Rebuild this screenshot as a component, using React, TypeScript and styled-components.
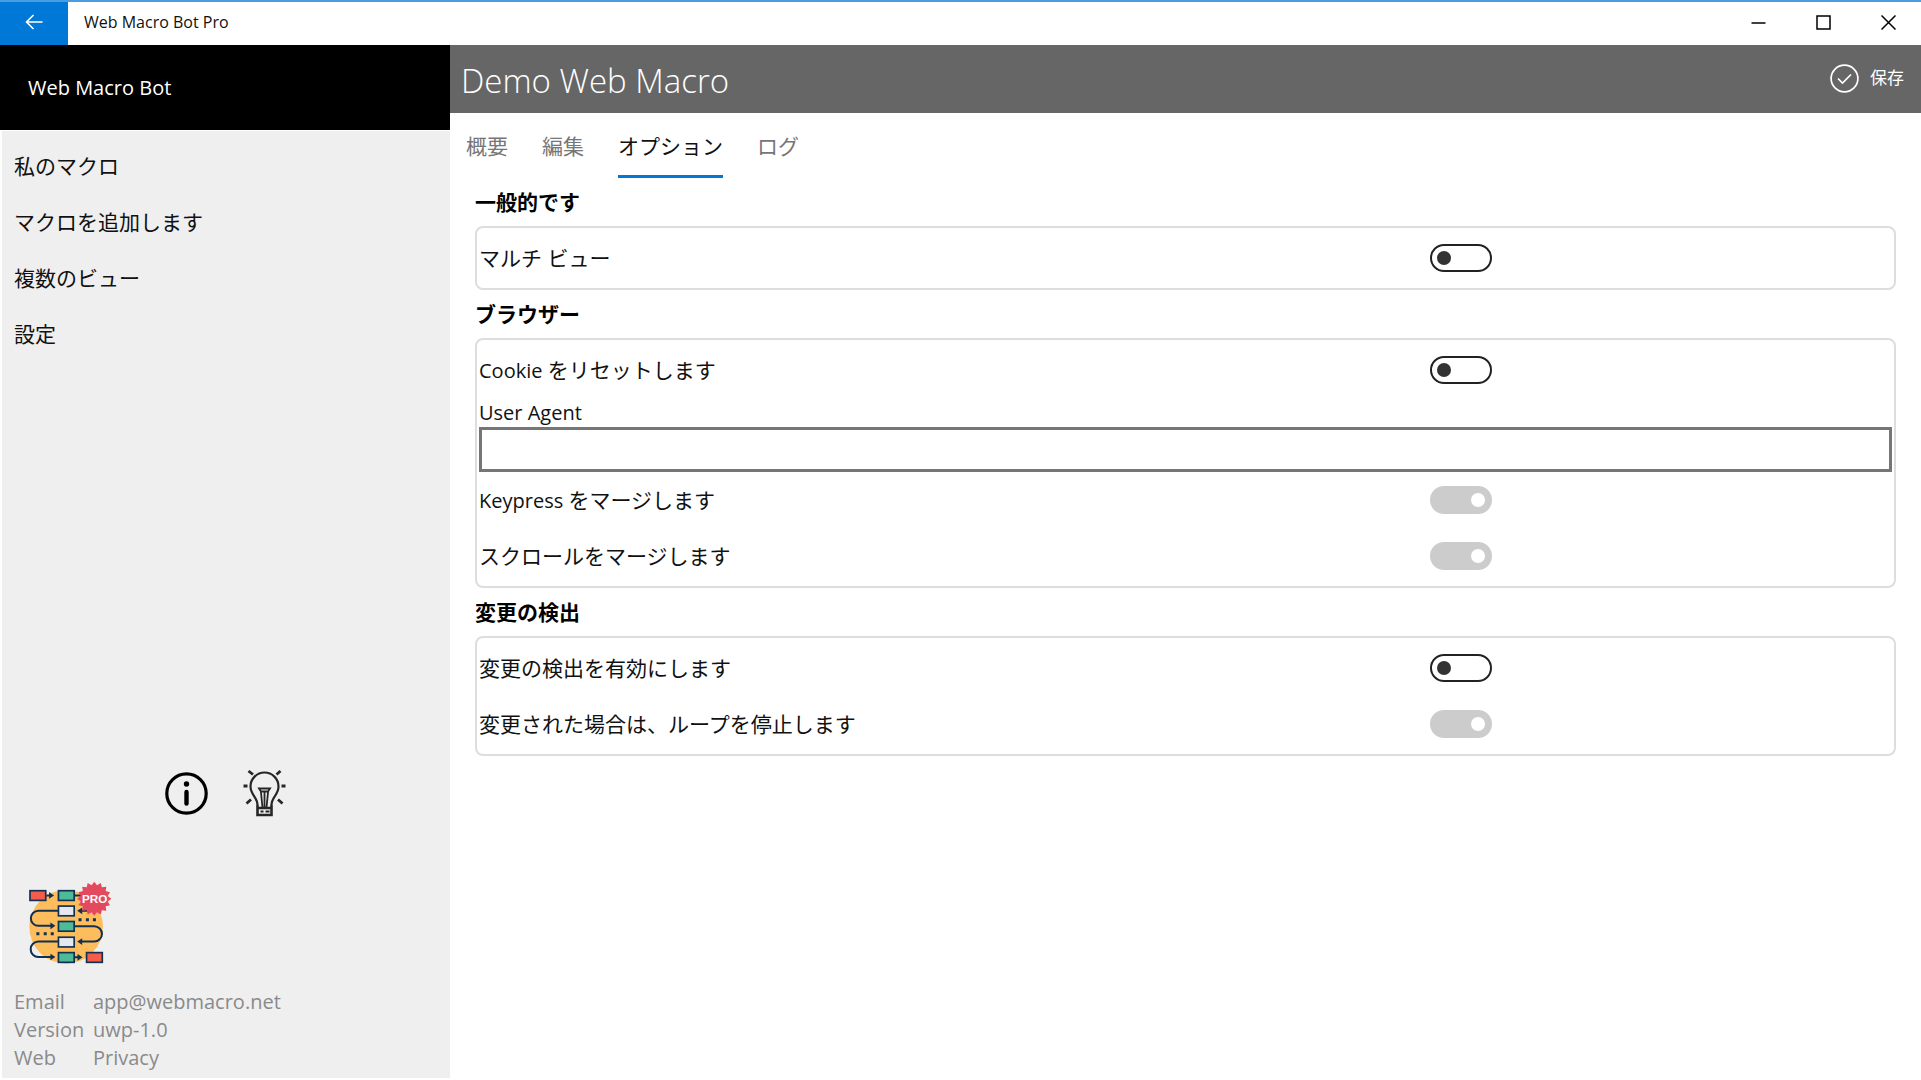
import React, { useState } from "react";
import styled, { createGlobalStyle, css } from "styled-components";

const GlobalStyle = createGlobalStyle`
  *, *::before, *::after { box-sizing: border-box; }
  body {
    margin: 0;
    background: #fff;
    color: #111;
    font-family: "Open Sans", "Noto Sans CJK JP", sans-serif;
    font-size: 21px;
    line-height: 28px;
  }
  button, input { font: inherit; color: inherit; }
`;

const Shell = styled.div`
  display: flex;
  flex-direction: column;
  min-height: 100vh;
`;

const TitleBar = styled.header`
  display: flex;
  align-items: stretch;
  height: 45px;
  border-top: 2px solid #4a9be0;
`;

const BackButton = styled.button`
  display: grid;
  place-items: center;
  width: 68px;
  margin: 0;
  padding: 0 0 3px;
  border: 0;
  background: #0078d7;
  color: #fff;
`;

const WindowTitle = styled.div`
  flex: 1;
  padding-left: 16px;
  font-size: 16px;
  line-height: 40px;
`;

const WindowButton = styled.button`
  display: grid;
  place-items: center;
  width: 65px;
  padding: 0 0 2px;
  border: 0;
  background: transparent;
`;

const Body = styled.div`
  display: flex;
  flex: 1;
`;

const Sidebar = styled.aside`
  display: flex;
  flex-direction: column;
  flex: 0 0 450px;
  padding-bottom: 2px;
`;

const Brand = styled.div`
  padding: 0 28px;
  background: #000;
  color: #fff;
  font-size: 20px;
  line-height: 85px;
`;

const SidePanel = styled.div`
  display: flex;
  flex-direction: column;
  flex: 1;
  margin: 1px 0 0 2px;
  padding: 7px 12px 6px;
  background: #efefef;
`;

const Nav = styled.nav`
  display: flex;
  flex-direction: column;
`;

const NavLink = styled.a`
  padding: 14px 0;
  color: #111;
  text-decoration: none;
`;

const IconRow = styled.div`
  display: flex;
  justify-content: center;
  align-items: center;
  gap: 34px;
  margin-top: auto;
`;

const IconButton = styled.button`
  display: grid;
  place-items: center;
  padding: 0;
  border: 0;
  background: transparent;
`;

const LogoBox = styled.div`
  display: flex;
  padding: 64px 15px 24px;
`;

const Facts = styled.dl`
  display: grid;
  grid-template-columns: 79px 1fr;
  margin: 0;
  color: #8a8a8a;
  font-size: 20px;

  dd { margin: 0; }
  a { color: inherit; text-decoration: none; }
`;

const Main = styled.main`
  flex: 1;
  min-width: 0;
`;

const PageBar = styled.div`
  display: flex;
  align-items: center;
  justify-content: space-between;
  height: 68px;
  padding: 0 17px 0 11px;
  background: #666;
  color: #fff;
`;

const PageTitle = styled.h1`
  margin: 0;
  padding-top: 4px;
  font-size: 33px;
  font-weight: 300;
  line-height: 44px;
`;

const SaveButton = styled.button`
  display: flex;
  align-items: center;
  gap: 11px;
  padding: 0 0 2px;
  border: 0;
  background: transparent;
  color: #fff;
  font-size: 17px;
  line-height: 28px;
`;

const Tabs = styled.div`
  display: flex;
  gap: 34px;
  padding: 0 16px;
`;

const Tab = styled.button<{ $active: boolean }>`
  height: 65px;
  padding: 4px 0 0;
  border: 0;
  border-bottom: 3px solid ${(p) => (p.$active ? "#0078d7" : "transparent")};
  background: transparent;
  color: ${(p) => (p.$active ? "#111" : "#767676")};
`;

const Options = styled.div`
  padding: 0 25px;
`;

const GroupTitle = styled.h2`
  display: flex;
  align-items: center;
  height: 48px;
  margin: 0;
  font-size: 21px;
  font-weight: 700;
  color: #000;
`;

const Group = styled.div`
  padding: 2px;
  border: 2px solid #ddd;
  border-radius: 8px;
`;

const Row = styled.div`
  display: grid;
  grid-template-columns: 2fr 1fr;
  align-items: center;
  height: 56px;
`;

const Latin = styled.span`
  font-size: 20px;
`;

const knob = css`
  content: "";
  width: 14px;
  height: 14px;
  border-radius: 50%;
`;

const Switch = styled.input`
  appearance: none;
  display: flex;
  align-items: center;
  width: 62px;
  height: 28px;
  margin: 0 0 0 9px;
  padding: 0 5px;
  border: 2px solid #222;
  border-radius: 14px;
  background: #fff;

  &::before { ${knob} background: #333; }

  &:checked {
    justify-content: flex-end;
    border-color: #0078d7;
    background: #0078d7;
  }
  &:checked::before { background: #fff; }

  &:disabled {
    border-color: #ccc;
    background: #ccc;
  }
`;

const FieldLabel = styled.label`
  display: block;
  font-size: 20px;
  line-height: 29px;
`;

const TextField = styled.input`
  display: block;
  width: 100%;
  height: 45px;
  padding: 0 10px;
  border: 3px solid #767676;
  border-radius: 0;
  background: #fff;
`;

function OptionRow({ id, children, on = false, disabled = false }: {
  id: string;
  children: React.ReactNode;
  on?: boolean;
  disabled?: boolean;
}) {
  return (
    <Row>
      <label htmlFor={id}>{children}</label>
      <Switch id={id} type="checkbox" role="switch" defaultChecked={on} disabled={disabled} />
    </Row>
  );
}

const InfoIcon = () => (
  <svg width="43" height="43" viewBox="0 0 43 43" fill="none" stroke="#000" aria-hidden="true">
    <circle cx="21.5" cy="21.5" r="19.7" strokeWidth="3.2" />
    <circle cx="21.5" cy="12" r="2.7" fill="#000" stroke="none" />
    <path d="M21.5 20v11.5" strokeWidth="4.4" strokeLinecap="round" />
  </svg>
);

const BulbIcon = () => (
  <svg width="45" height="48" viewBox="0 0 45 48" fill="none" stroke="#262626" strokeWidth="2.200" aria-hidden="true">
    <path d="M15.500 36c0-8-7-10-7-18.500a14 14 0 0 1 28 0c0 8.500-7 10.500-7 18.500" />
    <path d="M15.500 36v10h14V36M14.500 39h16" strokeWidth="2.600" />
    <path d="M18.500 42.500h3M23.500 42.500h4" strokeWidth="2" />
    <path d="M17 19.500h11l-2 3h-7zM18.800 21.500l1.700 17M26.200 21.500L24.500 38.500M22.500 22v17" strokeWidth="1.800" />
    <path d="M6.500 2l4.500 3.500M38.500 2L34.500 5.500M1.500 17h4M39.500 17h4M4.500 34.500l4.500-4M40.500 34.500l-4.500-4" strokeWidth="2.800" />
  </svg>
);

const burstPoints = Array.from({ length: 32 }, (_, i) => {
  const radius = i % 2 === 0 ? 51 : 41;
  const angle = (Math.PI * i) / 16 - Math.PI / 2;
  return `${237 + radius * Math.cos(angle)},${87 + radius * Math.sin(angle)}`;
}).join(" ");

const logoBoxes: Array<[number, number, string]> = [
  [45, 63, "#f55c4b"],
  [130, 63, "#4dbb98"],
  [130, 109, "#e4e8f1"],
  [130, 155, "#4dbb98"],
  [130, 202, "#e4e8f1"],
  [130, 248, "#4dbb98"],
  [214, 248, "#f55c4b"],
];

const Logo = () => (
  <svg width="83" height="83" viewBox="42 34 248 248" role="img" aria-label="Web Macro Bot Pro">
    <circle cx="153" cy="171" r="110" fill="#fdbd5c" />
    <g fill="none" stroke="#12304f" strokeWidth="6">
      <path d="M94 77h12M179 77h28M130 123H70a22.500 22.500 0 0 0 0 45h40M179 169h58a23 23 0 0 1 0 46h-42M130 215H70a23 23 0 0 0 0 46h40M179 262h12M219 123h-22" />
    </g>
    <g fill="#12304f">
      <path d="M102 67l15 10-15 10zM106 158l15 10-15 10zM106 251l15 10-15 10zM187 252l15 10-15 10zM201 113l-15 10 15 10zM201 205l-15 10 15 10z" />
      <path d="M190 145h9v9h-9zM212 145h9v9h-9zM233 145h9v9h-9zM64 187h9v9h-9zM86 187h9v9h-9zM107 187h9v9h-9z" />
    </g>
    {logoBoxes.map(([x, y, fill]) => (
      <rect key={`${x}-${y}`} x={x} y={y} width="47" height="29" fill={fill} stroke="#12304f" strokeWidth="5" />
    ))}
    <polygon points={burstPoints} fill="#e34a5d" />
    <text x="238" y="100" textAnchor="middle" fill="#fff" fontFamily="Liberation Sans, sans-serif" fontWeight="700" fontSize="35">PRO</text>
  </svg>
);

const navItems = ["私のマクロ", "マクロを追加します", "複数のビュー", "設定"];
const tabItems = ["概要", "編集", "オプション", "ログ"];

export default function App() {
  const [tab, setTab] = useState(2);
  const [agent, setAgent] = useState("");

  return (
    <Shell lang="ja">
      <GlobalStyle />
      <TitleBar>
        <BackButton aria-label="戻る">
          <svg width="18" height="16" viewBox="0 0 18 16" fill="none" stroke="currentColor" strokeWidth="1.600">
            <path d="M17.500 8H1.500M8.500 1L1.500 8l7 7" />
          </svg>
        </BackButton>
        <WindowTitle>Web Macro Bot Pro</WindowTitle>
        <WindowButton aria-label="最小化">
          <svg width="15" height="15" viewBox="0 0 15 15" stroke="#000" strokeWidth="1.500"><path d="M0.500 8h14" /></svg>
        </WindowButton>
        <WindowButton aria-label="最大化">
          <svg width="15" height="15" viewBox="0 0 15 15" fill="none" stroke="#000" strokeWidth="1.500"><path d="M1 1h13v13H1z" /></svg>
        </WindowButton>
        <WindowButton aria-label="閉じる">
          <svg width="15" height="15" viewBox="0 0 15 15" stroke="#000" strokeWidth="1.500"><path d="M0.500 0.500l14 14M14.500 0.500l-14 14" /></svg>
        </WindowButton>
      </TitleBar>

      <Body>
        <Sidebar>
          <Brand>Web Macro Bot</Brand>
          <SidePanel>
            <Nav>
              {navItems.map((item) => (
                <NavLink key={item} href="#">{item}</NavLink>
              ))}
            </Nav>
            <IconRow>
              <IconButton aria-label="情報"><InfoIcon /></IconButton>
              <IconButton aria-label="ヒント"><BulbIcon /></IconButton>
            </IconRow>
            <LogoBox><Logo /></LogoBox>
            <Facts>
              <dt>Email</dt>
              <dd><a href="mailto:app@webmacro.net">app@webmacro.net</a></dd>
              <dt>Version</dt>
              <dd>uwp-1.0</dd>
              <dt>Web</dt>
              <dd><a href="#">Privacy</a></dd>
            </Facts>
          </SidePanel>
        </Sidebar>

        <Main>
          <PageBar>
            <PageTitle>Demo Web Macro</PageTitle>
            <SaveButton>
              <svg width="29" height="29" viewBox="0 0 29 29" fill="none" stroke="currentColor" strokeWidth="1.700" aria-hidden="true">
                <circle cx="14.500" cy="14.500" r="13.400" />
                <path d="M8 14.500l4.500 4.500 8.500-8.500" />
              </svg>
              保存
            </SaveButton>
          </PageBar>
          <Tabs role="tablist">
            {tabItems.map((item, i) => (
              <Tab key={item} role="tab" aria-selected={tab === i} $active={tab === i} onClick={() => setTab(i)}>
                {item}
              </Tab>
            ))}
          </Tabs>
          <Options>
            <GroupTitle>一般的です</GroupTitle>
            <Group>
              <OptionRow id="multi-view">マルチ ビュー</OptionRow>
            </Group>
            <GroupTitle>ブラウザー</GroupTitle>
            <Group>
              <OptionRow id="reset-cookie"><Latin>Cookie </Latin>をリセットします</OptionRow>
              <FieldLabel htmlFor="user-agent">User Agent</FieldLabel>
              <TextField id="user-agent" type="text" value={agent} onChange={(e) => setAgent(e.target.value)} />
              <OptionRow id="merge-keypress" on disabled><Latin>Keypress </Latin>をマージします</OptionRow>
              <OptionRow id="merge-scroll" on disabled>スクロールをマージします</OptionRow>
            </Group>
            <GroupTitle>変更の検出</GroupTitle>
            <Group>
              <OptionRow id="detect-change">変更の検出を有効にします</OptionRow>
              <OptionRow id="stop-loop" on disabled>変更された場合は、ループを停止します</OptionRow>
            </Group>
          </Options>
        </Main>
      </Body>
    </Shell>
  );
}
